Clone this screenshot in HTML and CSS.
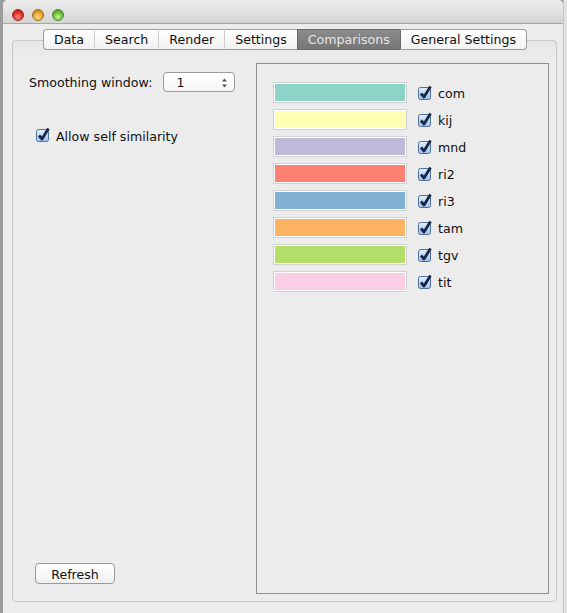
FILE: index.html
```html
<!DOCTYPE html>
<html>
<head>
<meta charset="utf-8">
<link rel="stylesheet" href="styles.css">
</head>
<body>
<div class="screen">
  <div class="strip"></div>
  <div class="window">
    <div class="titlebar">
      <span class="light red"></span>
      <span class="light yellow"></span>
      <span class="light green"></span>
    </div>
    <div class="content">
      <div class="tabs">
        <div class="tab">Data</div>
        <div class="tab">Search</div>
        <div class="tab">Render</div>
        <div class="tab">Settings</div>
        <div class="tab selected">Comparisons</div>
        <div class="tab">General Settings</div>
      </div>
      <div class="pane">
        <div class="left">
          <div class="smooth-row">
            <span class="label">Smoothing window:</span>
            <div class="spinner">
              <span class="spin-val">1</span>
              <svg class="spin-arrows" width="7" height="10" viewBox="0 0 7 10"><path d="M3.5 0.5 L6 3.5 L1 3.5 Z M3.5 9.5 L6 6.5 L1 6.5 Z" fill="#555"/></svg>
            </div>
          </div>
          <div class="check-row self">
            <svg class="cb" width="14" height="14" viewBox="0 0 14 14"><defs><linearGradient id="g1" x1="0" y1="0" x2="0" y2="1"><stop offset="0" stop-color="#e4f0fc"/><stop offset="1" stop-color="#9cc2ea"/></linearGradient></defs><rect x="0.5" y="1.5" width="12" height="12" rx="2" fill="url(#g1)" stroke="#50709c"/><path d="M3 7.5 L6 11 L12.5 0.5" fill="none" stroke="#17274a" stroke-width="2.8" stroke-linejoin="round"/></svg>
            <span class="label">Allow self similarity</span>
          </div>
          <button class="refresh">Refresh</button>
        </div>
        <div class="panel">
          <div class="item"><span class="swatch"><span class="fill" style="background:#8dd3c7"></span></span><svg class="cb" width="14" height="14" viewBox="0 0 14 14"><defs><linearGradient id="g2" x1="0" y1="0" x2="0" y2="1"><stop offset="0" stop-color="#e4f0fc"/><stop offset="1" stop-color="#9cc2ea"/></linearGradient></defs><rect x="0.5" y="1.5" width="12" height="12" rx="2" fill="url(#g2)" stroke="#50709c"/><path d="M3 7.5 L6 11 L12.5 0.5" fill="none" stroke="#17274a" stroke-width="2.8" stroke-linejoin="round"/></svg><span class="label">com</span></div>
          <div class="item"><span class="swatch"><span class="fill" style="background:#ffffb3"></span></span><svg class="cb" width="14" height="14" viewBox="0 0 14 14"><rect x="0.5" y="1.5" width="12" height="12" rx="2" fill="url(#g2)" stroke="#50709c"/><path d="M3 7.5 L6 11 L12.5 0.5" fill="none" stroke="#17274a" stroke-width="2.8" stroke-linejoin="round"/></svg><span class="label">kij</span></div>
          <div class="item"><span class="swatch"><span class="fill" style="background:#bebada"></span></span><svg class="cb" width="14" height="14" viewBox="0 0 14 14"><rect x="0.5" y="1.5" width="12" height="12" rx="2" fill="url(#g2)" stroke="#50709c"/><path d="M3 7.5 L6 11 L12.5 0.5" fill="none" stroke="#17274a" stroke-width="2.8" stroke-linejoin="round"/></svg><span class="label">mnd</span></div>
          <div class="item"><span class="swatch"><span class="fill" style="background:#fb8072"></span></span><svg class="cb" width="14" height="14" viewBox="0 0 14 14"><rect x="0.5" y="1.5" width="12" height="12" rx="2" fill="url(#g2)" stroke="#50709c"/><path d="M3 7.5 L6 11 L12.5 0.5" fill="none" stroke="#17274a" stroke-width="2.8" stroke-linejoin="round"/></svg><span class="label">ri2</span></div>
          <div class="item"><span class="swatch"><span class="fill" style="background:#80b1d3"></span></span><svg class="cb" width="14" height="14" viewBox="0 0 14 14"><rect x="0.5" y="1.5" width="12" height="12" rx="2" fill="url(#g2)" stroke="#50709c"/><path d="M3 7.5 L6 11 L12.5 0.5" fill="none" stroke="#17274a" stroke-width="2.8" stroke-linejoin="round"/></svg><span class="label">ri3</span></div>
          <div class="item"><span class="swatch"><span class="fill" style="background:#fdb462"></span></span><svg class="cb" width="14" height="14" viewBox="0 0 14 14"><rect x="0.5" y="1.5" width="12" height="12" rx="2" fill="url(#g2)" stroke="#50709c"/><path d="M3 7.5 L6 11 L12.5 0.5" fill="none" stroke="#17274a" stroke-width="2.8" stroke-linejoin="round"/></svg><span class="label">tam</span></div>
          <div class="item"><span class="swatch"><span class="fill" style="background:#b3de69"></span></span><svg class="cb" width="14" height="14" viewBox="0 0 14 14"><rect x="0.5" y="1.5" width="12" height="12" rx="2" fill="url(#g2)" stroke="#50709c"/><path d="M3 7.5 L6 11 L12.5 0.5" fill="none" stroke="#17274a" stroke-width="2.8" stroke-linejoin="round"/></svg><span class="label">tgv</span></div>
          <div class="item"><span class="swatch"><span class="fill" style="background:#fccde5"></span></span><svg class="cb" width="14" height="14" viewBox="0 0 14 14"><rect x="0.5" y="1.5" width="12" height="12" rx="2" fill="url(#g2)" stroke="#50709c"/><path d="M3 7.5 L6 11 L12.5 0.5" fill="none" stroke="#17274a" stroke-width="2.8" stroke-linejoin="round"/></svg><span class="label">tit</span></div>
        </div>
      </div>
    </div>
  </div>
  <div class="outside"></div>
</div>
</body>
</html>
```
FILE: styles.css
```css
html, body {
  margin: 0;
  padding: 0;
}
body {
  width: 567px;
  height: 613px;
  overflow: hidden;
  background: #9d9d9d;
  font-family: "DejaVu Sans", "Liberation Sans", sans-serif;
  font-size: 12.6px;
  color: #111;
}
.screen {
  display: flex;
  width: 567px;
  height: 613px;
}
.strip {
  width: 3px;
  flex: none;
  background: #9b9b9b;
}
.window {
  width: 560px;
  flex: none;
  display: flex;
  flex-direction: column;
  background: #ececec;
  border-radius: 5px 5px 0 0;
  overflow: hidden;
}
.outside {
  flex: 1;
  background: #e2e2e2;
  border-left: 1px solid #c4c4c4;
}
.titlebar {
  flex: none;
  border-bottom: 1px solid #a6a6a6;
  background: linear-gradient(#ededed, #d4d4d4);
  display: flex;
  align-items: flex-start;
  gap: 8px;
  padding: 9px 0 0 9px;
  box-sizing: border-box;
  height: 24px;
}
.light {
  width: 12px;
  height: 12px;
  border-radius: 50%;
  box-sizing: border-box;
}
.red {
  background: radial-gradient(circle at 50% 70%, #ff8a7a 0%, #e0302a 55%, #9e1410 100%);
  border: 1px solid #9a2a22;
}
.yellow {
  background: radial-gradient(circle at 50% 70%, #ffe08a 0%, #e6a02a 55%, #a4680e 100%);
  border: 1px solid #a0701c;
}
.green {
  background: radial-gradient(circle at 50% 70%, #c8f29a 0%, #6cbc3a 55%, #3a7a16 100%);
  border: 1px solid #4e8a2a;
}
.content {
  flex: 1;
  display: flex;
  flex-direction: column;
  padding: 5px 6px 0 9px;
}
.tabs {
  display: flex;
  justify-content: center;
  margin-bottom: -10px;
  position: relative;
  z-index: 1;
  padding-left: 1px;
}
.tab {
  height: 19px;
  line-height: 20px;
  padding: 0 10px;
  border-top: 1px solid #9c9c9c;
  border-bottom: 1px solid #9c9c9c;
  border-left: 1px solid #cfcfcf;
  background: linear-gradient(#ffffff, #f1f1f1);
  color: #111;
  white-space: nowrap;
}
.tab:first-child {
  border-left: 1px solid #9c9c9c;
  border-radius: 4px 0 0 4px;
}
.tab:last-child {
  border-right: 1px solid #9c9c9c;
  border-radius: 0 4px 4px 0;
}
.tab.selected {
  background: linear-gradient(#8c8c8c, #757575);
  color: #e6e6e6;
  border-top-color: #6a6a6a;
  border-bottom-color: #6a6a6a;
  border-left-color: #6a6a6a;
}
.tab.selected + .tab {
  border-left-color: #6a6a6a;
}
.pane {
  height: 562px;
  box-sizing: border-box;
  border: 1px solid #c6c6c6;
  border-radius: 4px;
  background: linear-gradient(#e6e6e6, #ececec 18px, #ececec);
  display: grid;
  grid-template-columns: 243px 293px;
  padding: 22px 8px 7px 0;
}
.left {
  display: flex;
  flex-direction: column;
  padding-left: 16px;
}
.smooth-row {
  display: flex;
  align-items: center;
  height: 20px;
  margin-top: 9px;
}
.smooth-row .label {
  padding-top: 1px;
}
.spinner {
  margin-left: 11px;
  width: 72px;
  height: 20px;
  box-sizing: border-box;
  border: 1px solid #9a9a9a;
  border-radius: 4px;
  background: linear-gradient(#ffffff, #f6f6f6);
  display: flex;
  align-items: center;
  padding: 1px 6px 0 12px;
}
.spin-val {
  flex: 1;
}
.check-row {
  display: flex;
  align-items: center;
  height: 16px;
}
.check-row.self {
  margin-top: 35px;
  padding-left: 7px;
}
.cb {
  flex: none;
  overflow: visible;
}
.check-row .label {
  margin-left: 6px;
  padding-top: 2px;
}
.refresh {
  margin-top: auto;
  margin-bottom: 10px;
  margin-left: 6px;
  width: 80px;
  height: 21px;
  border: 1px solid #9a9a9a;
  border-radius: 4px;
  background: linear-gradient(#ffffff, #f0f0f0);
  font-family: "DejaVu Sans", "Liberation Sans", sans-serif;
  font-size: 12.6px;
  color: #111;
  padding: 1px 0 0;
}
.panel {
  border: 1px solid #8e8e8e;
  box-sizing: border-box;
  height: 531px;
  padding: 18px 0 0 16px;
  display: flex;
  flex-direction: column;
  gap: 6px;
}
.item {
  display: flex;
  align-items: center;
  height: 21px;
}
.swatch {
  width: 134px;
  height: 21px;
  box-sizing: border-box;
  border: 1px solid #d2d2d2;
  padding: 1px;
  background: #ffffff;
  display: flex;
  margin-right: 11px;
}
.fill {
  flex: 1;
}
.item .label {
  margin-left: 6px;
  padding-top: 2px;
}
```
